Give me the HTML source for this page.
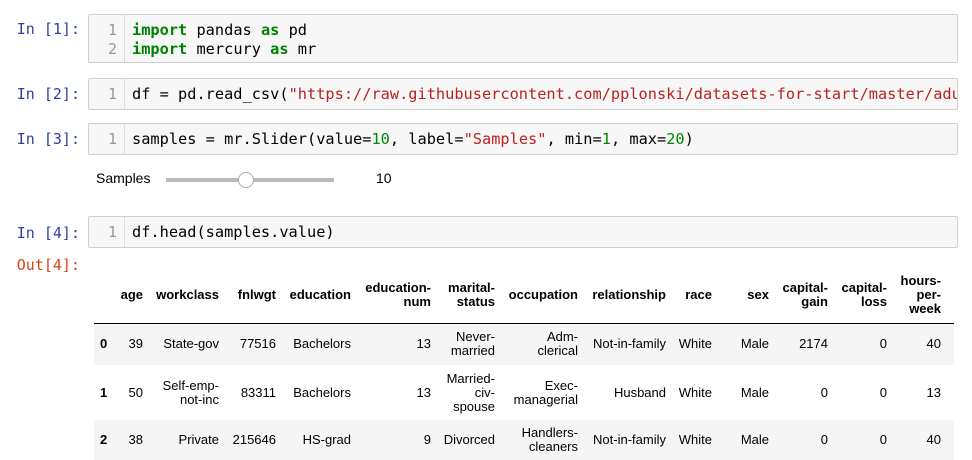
<!DOCTYPE html>
<html><head><meta charset="utf-8"><style>
*{margin:0;padding:0;box-sizing:border-box}
body{width:972px;height:460px;overflow:hidden;background:#fff;position:relative;font-family:"Liberation Sans",sans-serif}
.p{position:absolute;right:892px;font-family:"DejaVu Sans Mono",monospace;font-size:15px;color:#303f9f;white-space:pre}
.cell{position:absolute;left:88px;width:870px;background:#f7f7f7;border:1px solid #cfcfcf;border-radius:2px;overflow:hidden}
.g{position:absolute;left:0;top:0;bottom:0;width:36px;border-right:1px solid #ddd;background:#f7f7f7}
.code{position:absolute;font-family:"DejaVu Sans Mono",monospace;font-size:15.3px;line-height:19px;white-space:pre;color:#000}
.ln{position:absolute;right:8px;font-family:"DejaVu Sans Mono",monospace;font-size:15px;line-height:19px;color:#999;text-align:right}
.k{color:#008000;font-weight:bold}.s{color:#ba2121}.n{color:#080}
table{position:absolute;left:94px;top:268px;border-collapse:collapse;font-size:13px;line-height:14px;color:#000;table-layout:fixed;width:860px}
th,td{text-align:right;padding:0;vertical-align:middle}
th{font-weight:bold;vertical-align:middle}
thead tr{height:55px;border-bottom:1px solid #000}
tbody tr:nth-child(odd){background:#f5f5f5}
td:first-child,th:first-child{text-align:left;padding-left:6px;font-weight:bold}
</style></head><body>
<div class="p" style="top:20px">In [1]:</div>
<div class="cell" style="top:14px;height:49px"><div class="g"></div>
<div class="ln" style="top:6px;left:0;width:36px;right:auto;padding-right:8px">1<br>2</div>
<div class="code" style="left:43px;top:6px"><span class="k">import</span> pandas <span class="k">as</span> pd
<span class="k">import</span> mercury <span class="k">as</span> mr</div></div>

<div class="p" style="top:85px">In [2]:</div>
<div class="cell" style="top:78px;height:32px"><div class="g"></div>
<div class="ln" style="top:6px;left:0;width:36px;right:auto;padding-right:8px">1</div>
<div class="code" style="left:43px;top:6px">df = pd.read_csv(<span class="s">"https://raw.githubusercontent.com/pplonski/datasets-for-start/master/adult/data.csv"</span>)</div></div>

<div class="p" style="top:130px">In [3]:</div>
<div class="cell" style="top:123px;height:32px"><div class="g"></div>
<div class="ln" style="top:6px;left:0;width:36px;right:auto;padding-right:8px">1</div>
<div class="code" style="left:43px;top:6px">samples = mr.Slider(value=<span class="n">10</span>, label=<span class="s">"Samples"</span>, min=<span class="n">1</span>, max=<span class="n">20</span>)</div></div>

<div style="position:absolute;left:96px;top:170px;font-size:14px">Samples</div>
<div style="position:absolute;left:166px;top:178px;width:168px;height:4px;background:#bbb"></div>
<div style="position:absolute;left:238px;top:172px;width:16px;height:16px;border-radius:50%;background:#fff;border:1px solid #aaa"></div>
<div style="position:absolute;left:376px;top:170px;font-size:14px">10</div>

<div class="p" style="top:224px">In [4]:</div>
<div class="cell" style="top:216px;height:32px"><div class="g"></div>
<div class="ln" style="top:6px;left:0;width:36px;right:auto;padding-right:8px">1</div>
<div class="code" style="left:43px;top:6px">df.head(samples.value)</div></div>
<div class="p" style="top:256px;color:#d84315">Out[4]:</div>

<table>
<colgroup><col style="width:26px"><col style="width:23px"><col style="width:76px"><col style="width:57px"><col style="width:75px"><col style="width:80px"><col style="width:64px"><col style="width:83px"><col style="width:88px"><col style="width:46px"><col style="width:57px"><col style="width:59px"><col style="width:59px"><col style="width:54px"><col></colgroup>
<thead><tr><th></th><th>age</th><th>workclass</th><th>fnlwgt</th><th>education</th><th>education-<br>num</th><th>marital-<br>status</th><th>occupation</th><th>relationship</th><th>race</th><th>sex</th><th>capital-<br>gain</th><th>capital-<br>loss</th><th>hours-<br>per-<br>week</th><th></th></tr></thead>
<tbody>
<tr style="height:42px"><td>0</td><td>39</td><td>State-gov</td><td>77516</td><td>Bachelors</td><td>13</td><td>Never-<br>married</td><td>Adm-<br>clerical</td><td>Not-in-family</td><td>White</td><td>Male</td><td>2174</td><td>0</td><td>40</td><td></td></tr>
<tr style="height:55px"><td>1</td><td>50</td><td>Self-emp-<br>not-inc</td><td>83311</td><td>Bachelors</td><td>13</td><td>Married-<br>civ-<br>spouse</td><td>Exec-<br>managerial</td><td>Husband</td><td>White</td><td>Male</td><td>0</td><td>0</td><td>13</td><td></td></tr>
<tr style="height:40px"><td>2</td><td>38</td><td>Private</td><td>215646</td><td>HS-grad</td><td>9</td><td>Divorced</td><td>Handlers-<br>cleaners</td><td>Not-in-family</td><td>White</td><td>Male</td><td>0</td><td>0</td><td>40</td><td></td></tr>
</tbody></table>
</body></html>
